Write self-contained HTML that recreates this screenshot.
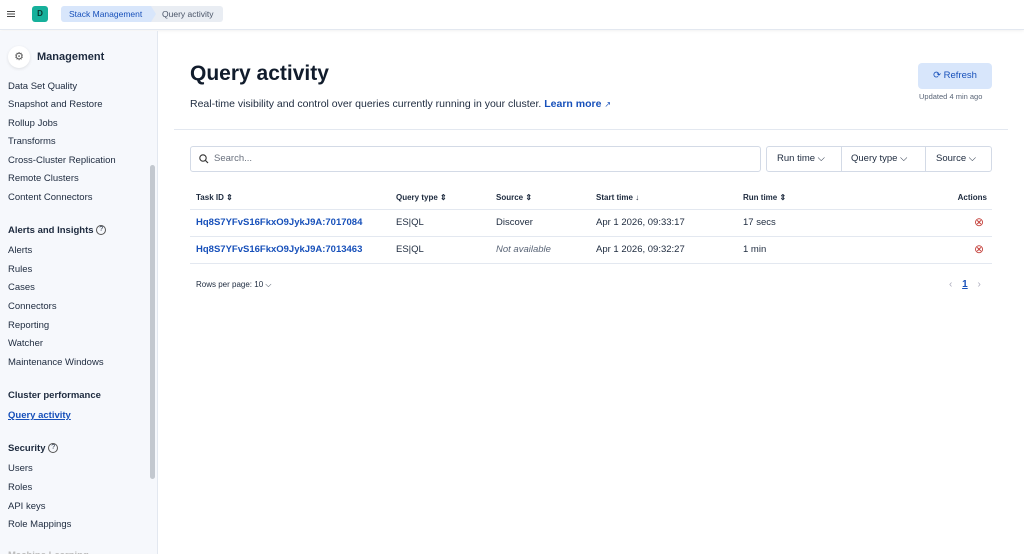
<!DOCTYPE html>
<html><head><meta charset="utf-8"><style>
*{box-sizing:border-box;margin:0;padding:0}
body{width:1024px;height:554px;overflow:hidden;font-family:"Liberation Sans",sans-serif;color:#1d2a3e;background:#fff;position:relative}
.top{position:absolute;left:0;top:0;width:1024px;height:30px;background:#fff;border-bottom:1px solid #e3e8f0;box-shadow:0 1px 3px rgba(0,0,0,.06)}
.side{position:absolute;left:0;top:31px;width:158px;height:523px;background:#f6f8fc;border-right:1px solid #e3e8f0;overflow:hidden}
.si{position:absolute;left:8px;font-size:9.5px;color:#1d2a3e}
.sh{font-weight:bold}
.a{color:#1750ba}
</style></head><body>
<div class="top">
 <div style="position:absolute;left:7px;top:11px;width:8px;height:1.2px;background:#444;box-shadow:0 2.5px 0 #444,0 5px 0 #444"></div>
 <div style="position:absolute;left:32px;top:6px;width:16px;height:16px;background:#16b09b;border-radius:3px;font-size:8px;font-weight:bold;text-align:center;line-height:16px;color:#07332c">D</div>
 <div style="position:absolute;left:61px;top:6px;width:92px;height:16px;background:#d8e6fb;border-radius:3px 0 0 3px;font-size:8.5px;color:#1750ba;line-height:16px;padding-left:8px">Stack Management</div>
 <div style="position:absolute;left:151px;top:6px;width:72px;height:16px;background:#e9edf3;border-radius:0 3px 3px 0;font-size:8.5px;color:#4a5568;line-height:16px;padding-left:11px">Query activity</div>
 <div style="position:absolute;left:151px;top:6px;width:0;height:0;border-top:8px solid transparent;border-bottom:8px solid transparent;border-left:5px solid #d8e6fb"></div>
</div>
<div class="side">
 <div style="position:absolute;left:8px;top:15px;width:22px;height:22px;border-radius:50%;background:#fff;box-shadow:0 1px 3px rgba(0,0,0,.1);font-size:11px;text-align:center;line-height:22px;color:#555">⚙</div>
 <div class="si sh" style="left:37px;top:20px;font-size:11px">Management</div>
 <div class="si" style="top:50px">Data Set Quality</div>
 <div class="si" style="top:68px">Snapshot and Restore</div>
 <div class="si" style="top:87px">Rollup Jobs</div>
 <div class="si" style="top:105px">Transforms</div>
 <div class="si" style="top:124px">Cross-Cluster Replication</div>
 <div class="si" style="top:142px">Remote Clusters</div>
 <div class="si" style="top:161px">Content Connectors</div>
 <div class="si sh" style="top:194px">Alerts and Insights <span style="font-weight:normal;display:inline-block;width:10px;height:10px;border:1px solid #555;border-radius:50%;font-size:7px;text-align:center;line-height:8px;vertical-align:middle">?</span></div>
 <div class="si" style="top:214px">Alerts</div>
 <div class="si" style="top:233px">Rules</div>
 <div class="si" style="top:251px">Cases</div>
 <div class="si" style="top:270px">Connectors</div>
 <div class="si" style="top:289px">Reporting</div>
 <div class="si" style="top:307px">Watcher</div>
 <div class="si" style="top:326px">Maintenance Windows</div>
 <div class="si sh" style="top:359px">Cluster performance</div>
 <div class="si" style="top:379px;color:#1750ba;text-decoration:underline;font-weight:bold">Query activity</div>
 <div class="si sh" style="top:412px">Security <span style="font-weight:normal;display:inline-block;width:10px;height:10px;border:1px solid #555;border-radius:50%;font-size:7px;text-align:center;line-height:8px;vertical-align:middle">?</span></div>
 <div class="si" style="top:432px">Users</div>
 <div class="si" style="top:451px">Roles</div>
 <div class="si" style="top:470px">API keys</div>
 <div class="si" style="top:488px">Role Mappings</div>
 <div class="si sh" style="top:519px;color:#bbb">Machine Learning</div>
 <div style="position:absolute;left:150px;top:134px;width:5px;height:314px;background:#c3c8cf;border-radius:3px"></div>
</div>
<div style="position:absolute;left:190px;top:62px;font-size:21px;font-weight:bold;color:#111c2c">Query activity</div>
<div style="position:absolute;left:190px;top:98px;font-size:10.5px;color:#1d2a3e">Real-time visibility and control over queries currently running in your cluster. <span class="a" style="font-weight:bold">Learn more</span> <span style="color:#1750ba;font-size:8px">↗</span></div>
<div style="position:absolute;left:918px;top:63px;width:74px;height:26px;background:#d8e6fb;border-radius:4px;font-size:9.5px;color:#1750ba;line-height:26px;text-align:center">⟳ Refresh</div>
<div style="position:absolute;left:919px;top:92px;font-size:7.5px;color:#5a6577">Updated 4 min ago</div>
<div style="position:absolute;left:174px;top:129px;width:834px;height:1px;background:#e3e8f0"></div>
<div style="position:absolute;left:190px;top:146px;width:571px;height:26px;border:1px solid #d3dae6;border-radius:3px;font-size:9.5px;color:#69707d;line-height:24px;padding-left:23px">Search...
 <svg style="position:absolute;left:8px;top:7px" width="10" height="10" viewBox="0 0 10 10"><circle cx="4" cy="4" r="3.2" fill="none" stroke="#333" stroke-width="1.1"/><path d="M6.5 6.5L9 9" stroke="#333" stroke-width="1.2"/></svg></div>
<div style="position:absolute;left:766px;top:146px;width:226px;height:26px;border:1px solid #d3dae6;border-radius:3px;font-size:9.5px;line-height:24px">
 <span style="position:absolute;left:10px">Run time ⌵</span>
 <span style="position:absolute;left:74px;top:0;width:1px;height:24px;background:#d3dae6"></span>
 <span style="position:absolute;left:84px">Query type ⌵</span>
 <span style="position:absolute;left:158px;top:0;width:1px;height:24px;background:#d3dae6"></span>
 <span style="position:absolute;left:169px">Source ⌵</span>
</div>
<div style="position:absolute;left:190px;top:193px;width:802px;font-size:8px;font-weight:bold">
 <span style="position:absolute;left:6px">Task ID ⇕</span>
 <span style="position:absolute;left:206px">Query type ⇕</span>
 <span style="position:absolute;left:306px">Source ⇕</span>
 <span style="position:absolute;left:406px">Start time ↓</span>
 <span style="position:absolute;left:553px">Run time ⇕</span>
 <span style="position:absolute;right:5px">Actions</span>
</div>
<div style="position:absolute;left:190px;top:209px;width:802px;height:1px;background:#e3e8f0"></div>
<div style="position:absolute;left:190px;top:236px;width:802px;height:1px;background:#e3e8f0"></div>
<div style="position:absolute;left:190px;top:263px;width:802px;height:1px;background:#e3e8f0"></div>
<div style="position:absolute;left:190px;top:217px;width:802px;font-size:9.5px">
 <span class="a" style="position:absolute;left:6px;font-weight:bold">Hq8S7YFvS16FkxO9JykJ9A:7017084</span>
 <span style="position:absolute;left:206px">ES|QL</span>
 <span style="position:absolute;left:306px">Discover</span>
 <span style="position:absolute;left:406px">Apr 1 2026, 09:33:17</span>
 <span style="position:absolute;left:553px">17 secs</span>
 <span style="position:absolute;right:8px;color:#c4403b;font-size:12px;top:-2px">⊗</span>
</div>
<div style="position:absolute;left:190px;top:244px;width:802px;font-size:9.5px">
 <span class="a" style="position:absolute;left:6px;font-weight:bold">Hq8S7YFvS16FkxO9JykJ9A:7013463</span>
 <span style="position:absolute;left:206px">ES|QL</span>
 <span style="position:absolute;left:306px;font-style:italic;color:#5a6577">Not available</span>
 <span style="position:absolute;left:406px">Apr 1 2026, 09:32:27</span>
 <span style="position:absolute;left:553px">1 min</span>
 <span style="position:absolute;right:8px;color:#c4403b;font-size:12px;top:-2px">⊗</span>
</div>
<div style="position:absolute;left:196px;top:280px;font-size:8px">Rows per page: 10 ⌵</div>
<div style="position:absolute;left:949px;top:279px;font-size:10px;color:#aab"><span>‹</span> <span style="color:#1750ba;text-decoration:underline;font-weight:bold;margin:0 7px">1</span> <span>›</span></div>
</body></html>
